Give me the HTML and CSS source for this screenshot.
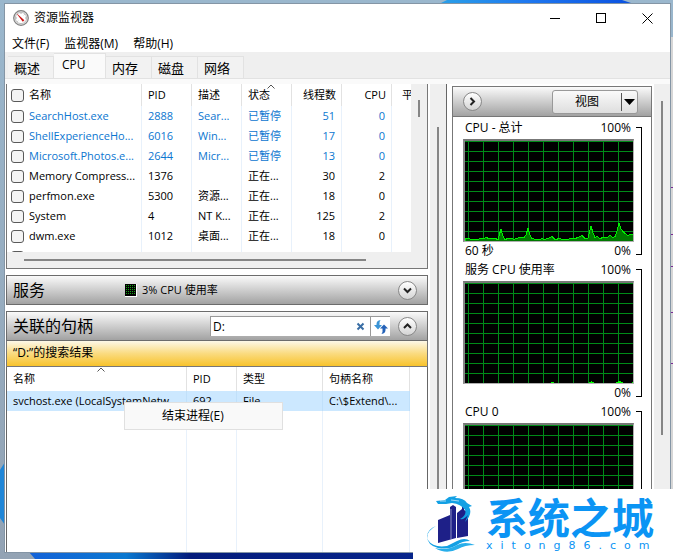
FILE: index.html
```html
<!DOCTYPE html>
<html lang="zh-CN">
<head>
<meta charset="utf-8">
<meta name="viewport" content="width=device-width, initial-scale=1">
<title>资源监视器</title>
<link rel="stylesheet" href="styles.css">
</head>
<body>
<div class="desktop">
  <svg class="wallpaper" viewBox="0 0 673 559" preserveAspectRatio="none" aria-hidden="true">
    <defs>
      <linearGradient id="sky" x1="0" y1="0" x2="0" y2="1"><stop offset="0" stop-color="#9ab7cd"/><stop offset="1" stop-color="#93a3b4"/></linearGradient>
      <linearGradient id="petal" x1="0" y1="0" x2="1" y2="0"><stop offset="0" stop-color="#2aa0e8"/><stop offset=".45" stop-color="#1e78f0"/><stop offset="1" stop-color="#0a50e0"/></linearGradient>
      <linearGradient id="base" x1="0" y1="0" x2="1" y2="0"><stop offset="0" stop-color="#1462d8"/><stop offset=".15" stop-color="#0a78d0"/><stop offset=".25" stop-color="#041c7c"/><stop offset="1" stop-color="#0a2f9c"/></linearGradient>
    </defs>
    <rect width="673" height="559" fill="url(#sky)"/>
    <path d="M439 4 447 0H622L634 4Z" fill="url(#petal)"/>
    <path d="M0 470 5 462V525L0 518Z" fill="#1f86d8"/>
    <path d="M29 552H673V559H35Z" fill="url(#base)"/>
    <rect x="670" y="37" width="3" height="522" fill="#d6d6d6"/>
    <path d="M671 187.500h2M671 234.500h2M671 266.500h2M671 312.500h2M671 363.500h2" stroke="#7a2a96"/>
  </svg>

  <main class="window">
    <header class="titlebar">
      <svg class="app-icon" viewBox="0 0 16 16" aria-hidden="true">
        <circle cx="8" cy="8" r="7.300" fill="#e4e4e4" stroke="#808080" stroke-width="1.200"/>
        <circle cx="8" cy="8" r="5.600" fill="#fff" stroke="#aaa" stroke-width=".7"/>
        <path d="M3.800 3.400 11.400 10.200 9.800 11.800 4.600 5Z" fill="#cc1414"/>
        <path d="M8 3v1M11.500 4.500l-.7.7M13 8h-1M3 8h1M4.500 11.500l.7-.7" stroke="#999" stroke-width=".8"/>
      </svg>
      <h1 class="title">资源监视器</h1>
      <div class="window-buttons">
        <button type="button" aria-label="最小化"><svg viewBox="0 0 11 11"><path d="M0 5.500h10"/></svg></button>
        <button type="button" aria-label="最大化"><svg viewBox="0 0 11 11"><rect x=".5" y=".5" width="9" height="9" rx="1"/></svg></button>
        <button type="button" aria-label="关闭"><svg viewBox="0 0 11 11" class="smooth"><path d="M.5.5l10 10M10.500.5l-10 10"/></svg></button>
      </div>
    </header>

    <nav class="menubar">
      <button type="button">文件(F)</button>
      <button type="button">监视器(M)</button>
      <button type="button">帮助(H)</button>
    </nav>

    <div class="tabs" role="tablist">
      <button type="button" role="tab">概述</button>
      <button type="button" role="tab" class="active" aria-selected="true">CPU</button>
      <button type="button" role="tab">内存</button>
      <button type="button" role="tab">磁盘</button>
      <button type="button" role="tab">网络</button>
    </div>

    <div class="content">
      <div class="left">
        <section class="processes">
          <div class="list">
            <table class="grid process-table">
              <thead>
                <tr>
                  <th class="c-name"><input type="checkbox" id="p0"><label for="p0">名称</label></th>
                  <th class="c-std">PID</th>
                  <th class="c-std">描述</th>
                  <th class="c-std sorted">状态<svg class="sort" viewBox="0 0 8 5" aria-hidden="true"><path d="M.5 4.500 4 1l3.500 3.500"/></svg></th>
                  <th class="c-std num">线程数</th>
                  <th class="c-std num">CPU</th>
                  <th class="c-last">平</th>
                </tr>
              </thead>
              <tbody>
                <tr class="suspended"><td><input type="checkbox" id="p1"><label for="p1">SearchHost.exe</label></td><td>2888</td><td>Sear...</td><td>已暂停</td><td class="num">51</td><td class="num">0</td><td></td></tr>
                <tr class="suspended"><td><input type="checkbox" id="p2"><label for="p2">ShellExperienceHo...</label></td><td>6016</td><td>Win...</td><td>已暂停</td><td class="num">17</td><td class="num">0</td><td></td></tr>
                <tr class="suspended"><td><input type="checkbox" id="p3"><label for="p3">Microsoft.Photos.e...</label></td><td>2644</td><td>Micr...</td><td>已暂停</td><td class="num">13</td><td class="num">0</td><td></td></tr>
                <tr><td><input type="checkbox" id="p4"><label for="p4">Memory Compress...</label></td><td>1376</td><td></td><td>正在...</td><td class="num">30</td><td class="num">2</td><td></td></tr>
                <tr><td><input type="checkbox" id="p5"><label for="p5">perfmon.exe</label></td><td>5300</td><td>资源...</td><td>正在...</td><td class="num">18</td><td class="num">0</td><td></td></tr>
                <tr><td><input type="checkbox" id="p6"><label for="p6">System</label></td><td>4</td><td>NT K...</td><td>正在...</td><td class="num">125</td><td class="num">2</td><td></td></tr>
                <tr><td><input type="checkbox" id="p7"><label for="p7">dwm.exe</label></td><td>1012</td><td>桌面...</td><td>正在...</td><td class="num">18</td><td class="num">0</td><td></td></tr>
                <tr><td><input type="checkbox" aria-label="选择进程"></td><td></td><td></td><td></td><td></td><td></td><td></td></tr>
              </tbody>
            </table>
          </div>
          <div class="vtrack"><div class="thumb"></div></div>
          <div class="htrack"><div class="thumb"></div></div>
        </section>

        <section class="bar services">
          <h2>服务</h2>
          <svg class="meter" viewBox="0 0 12 13" aria-hidden="true"><rect width="12" height="13" fill="#fff"/><rect width="11" height="12" fill="#000"/><path d="M1 1.500h10M1 3.500h10M1 5.500h10M1 7.500h10M1 9.500h10" stroke="#14a014" stroke-dasharray="1 1"/></svg>
          <span class="usage">3% CPU 使用率</span>
          <button type="button" class="round" aria-label="展开"><svg viewBox="0 0 9 9"><path d="M1 2.500 4.500 6 8 2.500"/></svg></button>
        </section>

        <section class="handles">
          <div class="bar">
            <h2>关联的句柄</h2>
            <div class="search">
              <input type="text" value="D:" aria-label="搜索句柄">
              <button type="button" aria-label="清除"><svg viewBox="0 0 9 9" class="clear"><path d="M1.500 1.500l6 6M7.500 1.500l-6 6"/></svg></button>
              <button type="button" class="refresh" aria-label="刷新"><svg viewBox="0 0 14 14"><path d="M6.500 0Q2.500.5 2.500 4V5H0L4 9.500 8 5H5.500Q5 2 6.500 0Z" fill="#3a94d6"/><path d="M7.500 14Q11.500 13.500 11.500 10V8.500H14L10 4.500 6 8.500H8.500Q9 12 7.500 14Z" fill="#2462b8"/></svg></button>
            </div>
            <button type="button" class="round" aria-label="折叠"><svg viewBox="0 0 9 9"><path d="M1 6 4.500 2.500 8 6"/></svg></button>
          </div>
          <p class="results">“D:”的搜索结果</p>
          <div class="handle-list">
            <table class="grid handle-table">
              <thead><tr>
                <th class="h-name sorted">名称<svg class="sort" viewBox="0 0 8 5" aria-hidden="true"><path d="M.5 4.500 4 1l3.500 3.500"/></svg></th>
                <th class="h-pid">PID</th><th class="h-type">类型</th><th class="h-path">句柄名称</th>
              </tr></thead>
              <tbody>
                <tr class="selected"><td>svchost.exe (LocalSystemNetw</td><td>692</td><td>File</td><td>C:\$Extend\...</td></tr>
                <tr class="filler"><td></td><td></td><td></td><td></td></tr>
              </tbody>
            </table>
            <div class="context-menu" role="menu"><button type="button" role="menuitem">结束进程(E)</button></div>
          </div>
        </section>
      </div>

      <div class="scroll left-scroll"><div class="thumb"></div></div>

      <aside class="graphs">
        <div class="graphs-head">
          <button type="button" class="round" aria-label="隐藏图表"><svg viewBox="0 0 9 9"><path d="M2.500 1 6 4.500 2.500 8"/></svg></button>
          <button type="button" class="view"><span>视图</span><svg viewBox="0 0 16 18" aria-hidden="true"><path d="M.5 0v18" stroke="#555"/><path d="M3 6h11L8.500 12Z"/></svg></button>
        </div>
        <div class="graph">
          <div class="graph-body">
            <div class="caption"><span>CPU - 总计</span><span>100%</span></div>
            <svg class="plot" viewBox="0 0 168 100" preserveAspectRatio="none" role="img" aria-label="CPU 总计图表">
              <defs><pattern id="cells" width="15" height="10" patternUnits="userSpaceOnUse"><path d="M3 0h1v10h-1zM0 0h15v1H0z" fill="#008a18"/></pattern></defs>
              <rect width="168" height="100" fill="#000"/><rect width="168" height="100" fill="url(#cells)"/>
              <path class="trace" d="M0 97.500H4L6 98.500H13L15 97.500H19L21 96.500 24 97.500H30L33 98.500 34 95 36 88 38 95 40 98.500 43 97.500H47L49 98.500 54 96.500H59L61 94 63 87 65 94 67 97.500 71 98.500H75L77 97.500 79 98.500 83 97.500 87 95.500 90 98.500 95 97.500 97 98.500H103L105 97.500H110L113 96.500 117 94.500 120 97.500 123 97 124 93 126 85 128 92 130 96.500 132 95.500 135 97.500 138 96.500H142L145 94.500 148 96.500 150 95.500 152 90 154 82.500 156 88 159 91.500 163 95 165 93.500 168 94V100H0Z"/>
            </svg>
            <div class="footer"><span>60 秒</span><span>0%</span></div>
          </div>
          <div class="bracket"></div>
        </div>
        <div class="graph">
          <div class="graph-body">
            <div class="caption"><span>服务 CPU 使用率</span><span>100%</span></div>
            <svg class="plot" viewBox="0 0 168 100" preserveAspectRatio="none" role="img" aria-label="服务 CPU 使用率图表">
              <rect width="168" height="100" fill="#000"/><rect width="168" height="100" fill="url(#cells)"/>
              <path d="M86 99.500h3M124 99.500h5M126 98.500h1M151 99.500h7M153 98.500h3M167 99.500h1" stroke="#0f0"/>
            </svg>
            <div class="footer"><span></span><span>0%</span></div>
          </div>
          <div class="bracket"></div>
        </div>
        <div class="graph">
          <div class="graph-body">
            <div class="caption"><span>CPU 0</span><span>100%</span></div>
            <svg class="plot" viewBox="0 0 168 100" preserveAspectRatio="none" role="img" aria-label="CPU 0 图表">
              <rect width="168" height="100" fill="#000"/><rect width="168" height="100" fill="url(#cells)"/>
            </svg>
          </div>
          <div class="bracket"></div>
        </div>
      </aside>

      <div class="scroll right-scroll"><div class="thumb"></div></div>
    </div>
  </main>

  <div class="watermark">
    <svg class="logo" viewBox="0 0 48 58" aria-hidden="true">
      <path d="M11 25 23 20V12L26 10 29 12V43L11 48ZM30 18 35 14V12L37 11V15L41 17V41L30 43Z" fill="#1e2088"/>
      <path d="M24 14V44" stroke="#fff" stroke-width=".5"/>
      <path d="M9 6 18 5 22 2 30 1 28 3Q37 3 40 8L45 11 42 12Q46 19 38 27L41 20Q37 25 33 24 40 20 38 15 34 9 25 8L19 9 11 9Z" fill="#12a0e4"/>
      <path d="M13 6h6M24 5l8 1" stroke="#fff" stroke-width=".6"/>
      <path d="M9 31Q-2 37 1 45 6 53 20 51L30 46Q38 42 43 46 35 46 30 50 22 55 11 53 0 50 0 41 1 34 9 31Z" fill="#12a0e4"/>
      <path d="M8 53Q20 56 30 50 38 46 48 50 38 50 31 54 19 60 8 53Z" fill="#28aeea"/>
    </svg>
    <div class="wordmark"><strong>系统之城</strong><span>xitong86.com</span></div>
  </div>
</div>
</body>
</html>
```
FILE: styles.css
```css
* { box-sizing: border-box; }

body {
  margin: 0;
  font: 12px/16px "Open Sans", "Noto Sans CJK SC", sans-serif;
  color: #000;
}

button, input {
  font: inherit;
  color: inherit;
  margin: 0;
  padding: 0;
  border: 0;
  background: none;
}

h1, h2, p { margin: 0; font-weight: 400; }
svg { display: block; }

.desktop {
  position: relative;
  height: 100vh;
  padding: 3px 2px 6px 4px;
  overflow: hidden;
}

.wallpaper {
  position: absolute;
  inset: 0;
  width: 100%;
  height: 100%;
}

.window {
  position: relative;
  display: flex;
  flex-direction: column;
  height: 100%;
  border: 1px solid #8495a5;
  background: #fff;
  overflow: hidden;
}

/* Title and menus */
.titlebar {
  display: flex;
  align-items: center;
  height: 28px;
  padding-left: 8px;
}
.app-icon { width: 16px; height: 16px; margin-right: 5px; }
.title { flex: 1; font-size: 12px; }
.window-buttons { display: flex; }
.window-buttons button {
  display: grid;
  place-items: center;
  width: 46px;
  height: 28px;
}
.window-buttons svg {
  width: 11px;
  height: 11px;
  fill: none;
  stroke: #000;
  shape-rendering: crispEdges;
}
.window-buttons .smooth { shape-rendering: auto; }

.menubar {
  display: flex;
  gap: 15px;
  height: 20px;
  padding-left: 7px;
}
.menubar button { height: 24px; }

.tabs {
  display: flex;
  align-items: flex-end;
  height: 32px;
  padding: 0 3px 4px;
  background: #efefef;
  border-bottom: 2px solid #fafafa;
  box-shadow: inset 0 -3px #fafafa, inset 0 -4px #e2e2e2;
}
.tabs button {
  min-width: 46px;
  height: 22px;
  padding: 0 6px;
  border: 1px solid #e2e2e2;
  border-left: 0;
  border-bottom: 0;
  background: #f2f2f2;
  font-size: 13px;
  text-align: left;
}
.tabs .active {
  min-width: 52px;
  height: 25px;
  padding: 0 8px 2px;
  background: #fafafa;
  font-size: 12px;
}

/* Main area */
.content {
  display: flex;
  flex: 1;
  min-height: 0;
  padding-left: 1px;
}
.left {
  display: flex;
  flex: 1;
  flex-direction: column;
  gap: 6px;
  min-width: 0;
}
.scroll { flex: none; width: 16px; background: #efefef; }
.left-scroll {
  width: 17px;
  margin: 0 5px 0 2px;
  padding: 43px 7px 0;
  border-right: 1px solid #666;
}
.left-scroll .thumb { width: 2px; height: 100%; background: #858585; }
.right-scroll { margin: 0 0 0 2px; padding: 17px 7px 0; }
.right-scroll .thumb { width: 2px; height: 334px; background: #858585; }

/* Data tables */
.grid {
  border-collapse: separate;
  border-spacing: 0;
  table-layout: fixed;
  font-size: 11px;
  line-height: 16px;
}
.grid th, .grid td {
  height: 20px;
  padding: 0 0 0 6px;
  border-right: 1px solid #e8f1fb;
  font-weight: 400;
  text-align: left;
  white-space: nowrap;
  overflow: hidden;
}
.grid th { border-right-color: #e2e2e2; }
.grid .num { padding-right: 6px; text-align: right; }
.grid th.num { padding-right: 5px; }
.sorted { position: relative; }
.sort {
  position: absolute;
  top: 0;
  left: 50%;
  width: 8px;
  height: 5px;
  fill: none;
  stroke: #555;
}

.processes {
  display: grid;
  grid-template: 168px 16px / 1fr 16px;
  flex: none;
  border: solid #777;
  border-width: 0 1px 1px;
  background: #efefef;
}
.list { background: #fff; overflow: hidden; }
.process-table { width: 100%; }
.process-table th { height: 22px; }
.process-table th:last-child, .process-table td:last-child { border-right: 0; }
.c-std { width: 50px; }
.c-last { width: 19px; }
.process-table .c-last { padding-left: 10px; }
.process-table th:first-child, .process-table td:first-child { padding-left: 4px; }
.suspended { color: #0b76d0; }
.grid input {
  appearance: none;
  width: 13px;
  height: 13px;
  margin-right: 5px;
  border: 1px solid #5a5a5a;
  border-radius: 3px;
  background: #f4f4f4;
  vertical-align: middle;
}
.grid label { vertical-align: middle; }
.vtrack { padding: 16px 7px; }
.vtrack .thumb { width: 2px; height: 17px; background: #858585; }
.htrack { padding: 7px 45px 0 17px; }
.htrack .thumb { height: 2px; background: #858585; }

/* Section bars */
.bar {
  display: flex;
  align-items: center;
  height: 30px;
  padding: 0 10px 0 6px;
  border: 1px solid #6c6c6c;
  background: linear-gradient(#fafafa, #a2a2a2);
}
.bar h2 { font-size: 16px; line-height: 24px; }
.services { flex: none; }
.meter { width: 12px; height: 13px; margin: 0 5px 0 80px; }
.usage { flex: 1; font-size: 11px; }
.round {
  display: grid;
  place-items: center;
  width: 19px;
  height: 19px;
  border: 1px solid #888;
  border-radius: 50%;
  background: linear-gradient(#fff, #d4d4d4);
}
.round svg { width: 9px; height: 9px; fill: none; stroke: #222; stroke-width: 2; }

.handles { display: flex; flex: 1; flex-direction: column; min-height: 0; }
.handles .bar { flex: none; }
.search {
  display: flex;
  width: 180px;
  height: 20px;
  margin: 0 8px 0 auto;
  border-top: 1px solid #999;
  border-left: 1px solid #999;
  background: #fff;
}
.search input { flex: 1; min-width: 0; padding-left: 2px; outline: 0; }
.search button { display: grid; place-items: center; width: 20px; }
.search .refresh { border-left: 1px solid #999; }
.search .refresh svg { width: 14px; height: 14px; }
.clear { width: 9px; height: 9px; fill: none; stroke: #3a6ea5; stroke-width: 2; }

.results {
  flex: none;
  height: 26px;
  padding-left: 6px;
  border: solid #777;
  border-width: 0 1px 1px;
  background: linear-gradient(#fdf8e8, #fadb80 50%, #f8c32c);
  line-height: 24px;
}
.handle-list {
  position: relative;
  flex: 1;
  min-height: 0;
  padding-right: 17px;
  border: solid #666;
  border-width: 0 1px;
}
.handle-table { width: 100%; height: 100%; }
.handle-table th { height: 24px; }
.h-name { width: 180px; }
.h-pid { width: 50px; }
.h-type { width: 86px; }
.selected td { background: #cce8ff; border-right-color: #c0e0fa; }
.handle-table .filler td { height: auto; }

.context-menu {
  position: absolute;
  top: 35px;
  left: 117px;
  width: 159px;
  border: 1px solid #e0e0e0;
  background: #f9f9f9;
}
.context-menu button { width: 100%; height: 26px; padding-left: 37px; text-align: left; }

/* Graph column */
.graphs {
  flex: none;
  width: 200px;
  margin-top: 2px;
  border: 1px solid #777;
  border-bottom: 0;
  overflow: hidden;
}
.graphs-head {
  display: flex;
  align-items: center;
  justify-content: space-between;
  height: 30px;
  padding: 0 13px 0 10px;
  border-bottom: 1px solid #777;
  background: linear-gradient(#fafafa, #a2a2a2);
}
.view {
  display: flex;
  align-items: center;
  width: 86px;
  height: 24px;
  border: 1px solid #999;
  border-radius: 3px;
  background: linear-gradient(#fafafa, #dedede);
}
.view span { flex: 1; }
.view svg { width: 16px; height: 18px; }
.graph { display: flex; gap: 2px; height: 142px; padding: 0 9px 0 10px; }
.graph-body { flex: 1; min-width: 0; }
.caption, .footer {
  display: flex;
  justify-content: space-between;
  padding: 0 3px 0 2px;
}
.caption { line-height: 22px; }
.footer { line-height: 18px; }
.plot {
  width: 100%;
  height: 103px;
  border: 1px solid #b0b0b0;
  border-width: 2px 1px 1px 2px;
  border-top-color: #777;
  border-left-color: #888;
  shape-rendering: crispEdges;
}
.trace { fill: #007800; stroke: #00f000; }
.bracket {
  width: 6px;
  margin: 10px 0 4px;
  border: solid #000;
  border-width: 1px 1px 1px 0;
}

/* Site mark */
.watermark {
  position: absolute;
  right: 0;
  bottom: 0;
  display: flex;
  width: 260px;
  height: 70px;
  padding: 6px 14px 0;
  gap: 11px;
  background: #fff;
}
.logo { flex: none; width: 48px; height: 58px; }
.wordmark { display: flex; flex-direction: column; color: #0b94f4; }
.wordmark strong { font: 700 42px/42px "Noto Sans CJK SC", sans-serif; white-space: nowrap; }
.wordmark span { font: 11px/18px "DejaVu Sans", sans-serif; letter-spacing: 8px; white-space: nowrap; }
```
